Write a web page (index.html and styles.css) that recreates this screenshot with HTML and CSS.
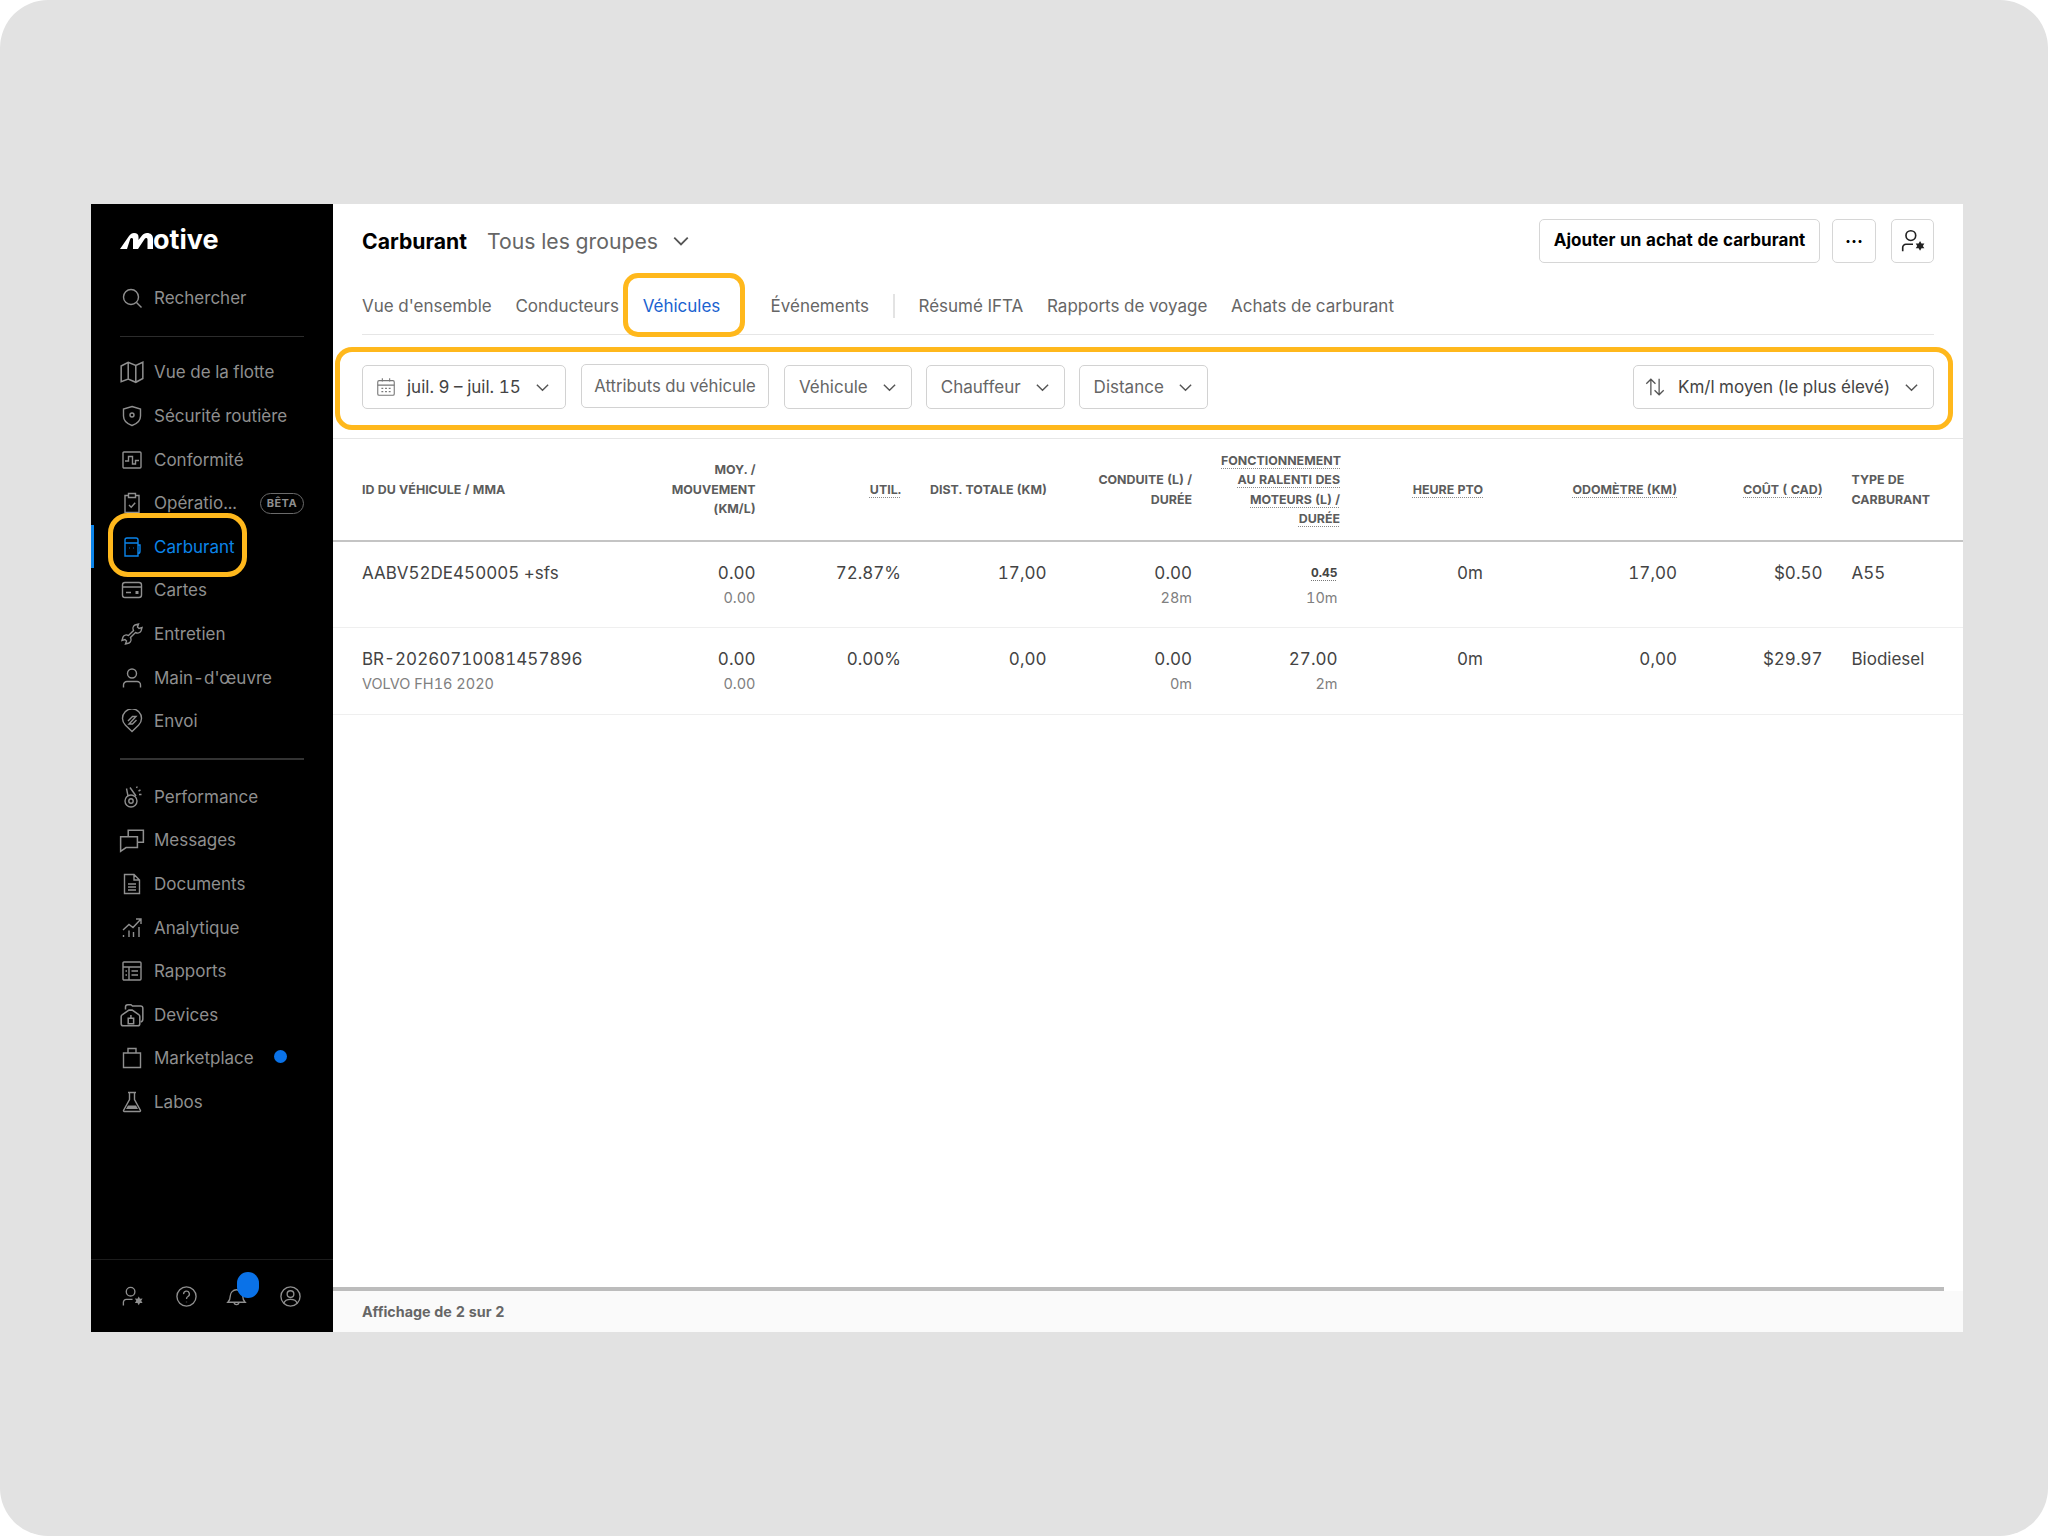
FILE: index.html
```html
<!DOCTYPE html>
<html lang="fr">
<head>
    <meta charset="UTF-8">
    <title>Carburant</title>
    <link rel="stylesheet" href="styles.css">
</head>
<body>
    <div class="frame">
        <div class="app">
            <!-- Barre latérale -->
            <aside class="sidebar">
                <div class="logo">
                    <svg class="logo-m" viewBox="0 0 33 16"><path d="M0 16 9 3C10.5 1 12 0 14 0c3 0 4.5 1.6 4.5 4v3L22 2.5C23.2.9 25 0 27 0c3.6 0 6 2.200 6 5.5V16h-5.5V6.5c0-1-.6-1.5-1.4-1.5-.5 0-1 .3-1.3.8L18 16h-5V6.5c0-1-.6-1.5-1.4-1.5-.5 0-1 .3-1.3.8L7 16z"/></svg>
                    <span>otive</span>
                </div>
                <a class="nav-item">
                    <svg class="icon" viewBox="0 0 24 24"><circle cx="11" cy="11" r="7.5"/><path d="m16.5 16.5 5 5"/></svg>
                    Rechercher
                </a>
                <div class="nav-sep"></div>
                <nav class="nav-group">
                    <a class="nav-item">
                        <svg class="icon icon-lg" viewBox="0 0 24 24"><path d="M2 6.5 8.5 3l7 3L22 3v15l-6.5 3.5-7-3L2 21zM8.5 3v15.5M15.5 6v15.5"/></svg>
                        Vue de la flotte
                    </a>
                    <a class="nav-item">
                        <svg class="icon" viewBox="0 0 24 24"><path d="M12 2.5 20.5 5v7c0 4.5-3.5 7.8-8.5 9.5-5-1.7-8.5-5-8.5-9.5V5z"/><circle cx="12" cy="11" r="2"/></svg>
                        Sécurité routière
                    </a>
                    <a class="nav-item">
                        <svg class="icon" viewBox="0 0 24 24"><rect x="3" y="4" width="18" height="16" rx="1"/><path d="M5 13h3.5V8.5h4V16h3v-3.5H19"/></svg>
                        Conformité
                    </a>
                    <a class="nav-item">
                        <svg class="icon" viewBox="0 0 24 24"><path d="M8.5 4.5H5v17h14v-17h-3.5M8.5 2.500h7v4h-7zM9 14l2.200 2.200 4-4.5"/></svg>
                        <span class="nav-label">Opératio...</span>
                        <span class="badge">BÊTA</span>
                    </a>
                    <a class="nav-item active">
                        <svg class="icon" viewBox="0 0 24 24"><path d="M5 21V5a2 2 0 0 1 2-2h9a2 2 0 0 1 2 2v16zM5 8h13M18 10h2v6c0 1.5-.8 2.5-2 2.5"/><path d="M9 13h.5M13.5 13h.5"/></svg>
                        Carburant
                    </a>
                    <a class="nav-item">
                        <svg class="icon" viewBox="0 0 24 24"><rect x="2.5" y="4.5" width="19" height="15" rx="2.5"/><path d="M2.5 9h19M6 14.5h5"/><path class="solid" d="M15.5 13h3v3h-3z"/></svg>
                        Cartes
                    </a>
                    <a class="nav-item">
                        <svg class="icon" viewBox="0 0 24 24"><path d="M15 3l3.5-1-1 3L19 6.5l3-1-1 3.500c-1 2-3.500 2.500-5.500 1.500l-5 5c1 2 .5 4.500-1.500 5.500L5.500 22l1-3L5 17.500l-3 1L3 15c1-2 3.500-2.500 5.500-1.500l5-5C12.500 6.500 13 4 15 3z"/></svg>
                        Entretien
                    </a>
                    <a class="nav-item">
                        <svg class="icon" viewBox="0 0 24 24"><circle cx="12" cy="7.5" r="4.5"/><path d="M3.5 21.5V19A3.5 3.5 0 0 1 7 15.5h10a3.500 3.500 0 0 1 3.500 3.500v2.500"/></svg>
                        Main-d'œuvre
                    </a>
                    <a class="nav-item">
                        <svg class="icon" viewBox="0 0 24 24"><path d="M12 22.500 5.500 16.300a9.500 9.500 0 1 1 13 0z"/><path d="M8 12l4.500-4.500H16L9 15h3.500l4-4"/></svg>
                        Envoi
                    </a>
                </nav>
                <div class="nav-sep sep-thick"></div>
                <nav class="nav-group">
                    <a class="nav-item">
                        <svg class="icon" viewBox="0 0 24 24"><circle cx="11" cy="16" r="6"/><circle cx="11" cy="16" r="2.2"/><path d="M6.500 3.500 8 11M10 2.500 16 11M16.500 3l.8-1.500M18.500 6l2-1M19 9.500h2.500"/></svg>
                        Performance
                    </a>
                    <a class="nav-item">
                        <svg class="icon icon-lg" viewBox="0 0 24 24"><path d="M8.5 9V3h14v11H17"/><path d="M1.5 9H17v10H6.5l-5 3.5z"/></svg>
                        Messages
                    </a>
                    <a class="nav-item">
                        <svg class="icon" viewBox="0 0 24 24"><path d="M4.5 2.5H14L19.5 8v13.500h-15zM14 2.500V8h5.500M8 12h8M8 15h8M8 18h8"/></svg>
                        Documents
                    </a>
                    <a class="nav-item">
                        <svg class="icon" viewBox="0 0 24 24"><path d="M3 14 9 8.5l4 3 7.500-8M16 3h5v5M3.500 21v-2M9 21v-6.500M13.500 21V16M19 21V11"/></svg>
                        Analytique
                    </a>
                    <a class="nav-item">
                        <svg class="icon" viewBox="0 0 24 24"><rect x="3" y="3" width="18" height="18" rx="1"/><path d="M3 8h18M9 8v13M5.500 12H7M5.500 16H7M11.500 12H18M11.500 16H18"/></svg>
                        Rapports
                    </a>
                    <a class="nav-item">
                        <svg class="icon icon-lg" viewBox="0 0 24 24"><path d="M6 7V4.500a2 2 0 0 1 2-2h3l1.500 1.200H20a2 2 0 0 1 2 2v10c0 1.500-.8 2.500-2 2.800"/><path d="M2 13.500a2 2 0 0 1 1.200-1.800l6-4.200h3l6 4.200a2 2 0 0 1 1 1.800V20a2 2 0 0 1-2 2H4a2 2 0 0 1-2-2z"/><path d="M8.500 15h5v5h-5zM11 12v3"/></svg>
                        Devices
                    </a>
                    <a class="nav-item">
                        <svg class="icon" viewBox="0 0 24 24"><path d="M3.500 7h17v14.500h-17zM8 7V2.500h8V7"/></svg>
                        <span class="nav-label">Marketplace</span>
                        <span class="dot"></span>
                    </a>
                    <a class="nav-item">
                        <svg class="icon" viewBox="0 0 24 24"><path d="M8 2.500h8M9.500 2.500v7L3.500 20.500a.8.8 0 0 0 .7 1h15.600a.8.8 0 0 0 .7-1L14.500 9.500v-7"/><path class="solid" d="M8 15.500h8l2 3.500H6z"/></svg>
                        Labos
                    </a>
                </nav>
                <div class="side-foot">
                    <svg class="foot-icon" viewBox="0 0 24 24"><circle cx="10" cy="7" r="4.5"/><path d="M2.500 21.500V18a3 3 0 0 1 3-3H12"/><path class="solid" d="m18.500 12 1.300 2.300 2.700-.1-1.400 2.300 1.400 2.300-2.700-.1-1.300 2.300-1.300-2.300-2.700.1 1.400-2.300-1.400-2.300 2.700.1z"/></svg>
                    <svg class="foot-icon" viewBox="0 0 24 24"><circle cx="12" cy="12" r="10"/><path d="M9 9.500a3 3 0 1 1 4.500 2.500c-1 .6-1.500 1.200-1.500 2.500M12 17.500v.5"/></svg>
                    <div class="bell">
                        <svg class="foot-icon" viewBox="0 0 24 24"><path d="M3 18c1.500-1.500 2.500-3 2.500-6.500a6.500 6.500 0 0 1 13 0c0 3.500 1 5 2.500 6.500zM9.500 18a2.500 2.500 0 0 0 5 0"/></svg>
                        <span class="bell-count"></span>
                    </div>
                    <svg class="foot-icon" viewBox="0 0 24 24"><circle cx="12" cy="12" r="10"/><circle cx="12" cy="9.500" r="3.500"/><path d="M5 19c1-3 3.500-4 7-4s6 1 7 4"/></svg>
                </div>
            </aside>

            <!-- Contenu principal -->
            <main class="main">
                <div class="content-head">
                    <div class="title-row">
                        <h1>Carburant</h1>
                        <div class="group-select">
                            Tous les groupes
                            <svg class="chev chev-lg" viewBox="0 0 16 16"><path d="m2 5 6 6 6-6"/></svg>
                        </div>
                        <div class="actions">
                            <button class="btn btn-add">Ajouter un achat de carburant</button>
                            <button class="btn btn-square">···</button>
                            <button class="btn btn-square btn-user">
                                <svg class="btn-icon" viewBox="0 0 24 24"><circle cx="10" cy="7" r="4.5"/><path d="M2.500 21.500V18a3 3 0 0 1 3-3H12"/><path class="solid" d="m18.500 12 1.300 2.300 2.700-.1-1.400 2.300 1.400 2.300-2.700-.1-1.300 2.300-1.300-2.300-2.700.1 1.400-2.300-1.400-2.300 2.700.1z"/></svg>
                            </button>
                        </div>
                    </div>
                    <div class="tabs">
                        <a class="tab">Vue d'ensemble</a>
                        <a class="tab">Conducteurs</a>
                        <a class="tab tab-on">Véhicules</a>
                        <a class="tab tab-after">Événements</a>
                        <span class="tab-sep"></span>
                        <a class="tab">Résumé IFTA</a>
                        <a class="tab">Rapports de voyage</a>
                        <a class="tab">Achats de carburant</a>
                    </div>
                    <div class="filters">
                        <button class="select select-date">
                            <svg class="cal" viewBox="0 0 24 24"><rect x="3" y="5" width="18" height="16" rx="1.5"/><path d="M3 10h18M8 2.500V6M16 2.500V6M7 13.500h2M11 13.500h2M15 13.500h2M7 17h2M11 17h2M15 17h2"/></svg>
                            <span class="dark">juil. 9 – juil. 15</span>
                            <svg class="chev" viewBox="0 0 16 16"><path d="m2 5 6 6 6-6"/></svg>
                        </button>
                        <button class="select select-plain">Attributs du véhicule</button>
                        <button class="select">Véhicule <svg class="chev" viewBox="0 0 16 16"><path d="m2 5 6 6 6-6"/></svg></button>
                        <button class="select">Chauffeur <svg class="chev" viewBox="0 0 16 16"><path d="m2 5 6 6 6-6"/></svg></button>
                        <button class="select">Distance <svg class="chev" viewBox="0 0 16 16"><path d="m2 5 6 6 6-6"/></svg></button>
                        <button class="select select-sort">
                            <svg class="sort" viewBox="0 0 24 24"><path d="M7.500 21V3.500M2.500 8.500l5-5 5 5M16.500 3v17.500M11.500 15.500l5 5 5-5"/></svg>
                            <span class="dark sort-label">Km/l moyen (le plus élevé)</span>
                            <svg class="chev" viewBox="0 0 16 16"><path d="m2 5 6 6 6-6"/></svg>
                        </button>
                    </div>
                </div>

                <div class="table-wrap">
                    <table class="data">
                        <colgroup>
                            <col class="c-id"><col class="c-moy"><col class="c-std"><col class="c-std"><col class="c-std"><col class="c-idle"><col class="c-pto"><col class="c-odo"><col class="c-std"><col class="c-type">
                        </colgroup>
                        <thead>
                            <tr>
                                <th class="left">ID du véhicule / MMA</th>
                                <th>Moy. / mouvement (km/l)</th>
                                <th><u>Util.</u></th>
                                <th class="nowrap">Dist. totale (km)</th>
                                <th>Conduite (L) / durée</th>
                                <th><u>Fonctionnement au ralenti des moteurs (L) / durée</u></th>
                                <th><u>Heure PTO</u></th>
                                <th><u>Odomètre (km)</u></th>
                                <th><u>Coût ( CAD)</u></th>
                                <th class="left">Type de carburant</th>
                            </tr>
                        </thead>
                        <tbody>
                            <tr>
                                <td class="left">AABV52DE450005 +sfs</td>
                                <td>0.00<small>0.00</small></td>
                                <td>72.87%</td>
                                <td>17,00</td>
                                <td>0.00<small>28m</small></td>
                                <td class="shift"><b class="tiny">0.45</b><small>10m</small></td>
                                <td>0m</td>
                                <td>17,00</td>
                                <td>$0.50</td>
                                <td class="left">A55</td>
                            </tr>
                            <tr>
                                <td class="left">BR-20260710081457896<small>VOLVO FH16 2020</small></td>
                                <td>0.00<small>0.00</small></td>
                                <td>0.00%</td>
                                <td>0,00</td>
                                <td>0.00<small>0m</small></td>
                                <td class="shift">27.00<small>2m</small></td>
                                <td>0m</td>
                                <td>0,00</td>
                                <td>$29.97</td>
                                <td class="left">Biodiesel</td>
                            </tr>
                        </tbody>
                    </table>
                </div>
                <div class="scroll-thumb"></div>
                <div class="table-foot">Affichage de 2 sur 2</div>
            </main>
        </div>
    </div>
</body>
</html>
```

FILE: styles.css
```css
*, *::before, *::after {
    box-sizing: border-box;
}
body {
    margin: 0;
    background-color: #ffffff;
    font-family: Inter, "Liberation Sans", sans-serif;
    font-variant-numeric: tabular-nums;
}
.frame {
    width: 2048px;
    height: 1536px;
    padding: 204px 85px 204px 91px;
    background-color: #e2e2e2;
    border-radius: 48px;
}
.app {
    display: flex;
    height: 1128px;
    background-color: #ffffff;
}

/* Barre latérale */
.sidebar {
    display: flex;
    flex-direction: column;
    width: 242px;
    flex-shrink: 0;
    background-color: #000000;
    color: #8f8f8f;
    font-size: 17px;
}
.logo {
    display: flex;
    align-items: flex-end;
    height: 34px;
    margin: 20px 0 18px 29px;
    padding-bottom: 8px;
    color: #ffffff;
    font-size: 27px;
    font-weight: 700;
    line-height: 20px;
}
.logo-m {
    width: 33px;
    height: 16px;
    margin-bottom: 1px;
    fill: #ffffff;
}
.nav-item {
    position: relative;
    display: flex;
    align-items: center;
    height: 43.6px;
    padding-left: 29px;
    padding-right: 29px;
}
.icon {
    width: 24px;
    height: 24px;
    margin-right: 10px;
    flex-shrink: 0;
    fill: none;
    stroke: currentColor;
    stroke-width: 1.4;
}
.icon-lg {
    width: 26px;
    height: 26px;
    margin-left: -1px;
    margin-right: 9px;
}
.solid {
    fill: currentColor;
    stroke: none;
}
.nav-sep {
    height: 1px;
    margin: 16px 29px 14px;
    background-color: #2c2c2c;
}
.sep-thick {
    height: 2px;
    margin: 15px 29px 15px;
    background-color: #333333;
}
.nav-label {
    flex: 1;
}
.badge {
    padding: 0 6px;
    height: 21px;
    line-height: 19px;
    border: 1px solid #6a6a6a;
    border-radius: 11px;
    font-size: 11px;
    font-weight: 700;
    letter-spacing: 0.4px;
}
.dot {
    width: 13px;
    height: 13px;
    margin-right: 17px;
    margin-top: -3px;
    border-radius: 50%;
    background-color: #0a72e8;
}
.active {
    color: #0b84ea;
}
.active::before {
    content: "";
    position: absolute;
    left: 0;
    top: 0;
    width: 3px;
    height: 43px;
    background-color: #0b84ea;
}
.active::after {
    content: "";
    position: absolute;
    left: 17px;
    top: -12px;
    width: 139px;
    height: 64px;
    border: 5px solid #ffb81c;
    border-radius: 20px;
}
.side-foot {
    display: flex;
    align-items: center;
    justify-content: space-between;
    height: 73px;
    margin-top: auto;
    padding: 0 31px 0 30px;
    border-top: 1px solid #1c1c1c;
}
.foot-icon {
    display: block;
    width: 23px;
    height: 23px;
    fill: none;
    stroke: #8f8f8f;
    stroke-width: 1.4;
    color: #8f8f8f;
}
.bell {
    position: relative;
    margin-left: -4px;
}
.bell-count {
    position: absolute;
    left: 12px;
    top: -13px;
    width: 22px;
    height: 26px;
    border-radius: 11px;
    background-color: #0a72e8;
}

/* Contenu */
.main {
    flex: 1;
    display: flex;
    flex-direction: column;
    min-width: 0;
}
.content-head {
    padding: 15px 29px 0;
}
.title-row {
    display: flex;
    align-items: center;
    height: 44px;
}
h1 {
    margin: 0 20px 0 0;
    font-size: 21.2px;
    font-weight: 700;
    color: #000000;
}
.group-select {
    display: flex;
    align-items: center;
    font-size: 21.2px;
    color: #666666;
}
.chev {
    width: 15px;
    height: 15px;
    margin-left: 14px;
    flex-shrink: 0;
    fill: none;
    stroke: #555555;
    stroke-width: 1.5;
}
.chev-lg {
    width: 18px;
    height: 18px;
    margin-left: 14px;
    stroke-width: 1.6;
}
.actions {
    display: flex;
    gap: 12px;
    margin-left: auto;
}
.btn {
    height: 44px;
    border: 1px solid #d6d6d6;
    border-radius: 5px;
    background-color: #ffffff;
    font-family: inherit;
    font-variant-numeric: inherit;
    color: #000000;
}
.btn-add {
    width: 281px;
    padding: 0 0 2px;
    font-size: 17px;
    font-weight: 700;
    letter-spacing: 0.05px;
}
.btn-square {
    display: flex;
    align-items: center;
    justify-content: center;
    width: 44px;
    padding: 0;
    font-size: 18px;
    font-weight: 700;
}
.btn-user {
    width: 43px;
    margin-left: 3px;
}
.btn-icon {
    width: 26px;
    height: 26px;
    fill: none;
    stroke: #222222;
    stroke-width: 1.5;
    color: #222222;
}
.tabs {
    display: flex;
    align-items: center;
    gap: 23.7px;
    height: 57px;
    margin-top: 15px;
    border-bottom: 1px solid #e6e6e6;
    font-size: 17px;
    color: #666666;
}
.tab-on {
    position: relative;
    color: #1a63d0;
}
.tab-on::after {
    content: "";
    position: absolute;
    left: -20px;
    top: -23px;
    width: 122px;
    height: 64px;
    border: 5px solid #ffb81c;
    border-radius: 15px;
}
.tab-after {
    margin-left: 26.5px;
}
.tab-sep {
    width: 2px;
    height: 24px;
    background-color: #e3e3e3;
}
.filters {
    position: relative;
    display: flex;
    gap: 14px;
    padding: 30px 0 29px;
}
.filters::after {
    content: "";
    position: absolute;
    left: -27px;
    right: -19px;
    top: 12px;
    height: 83px;
    border: 5px solid #ffb81c;
    border-radius: 17px;
    pointer-events: none;
}
.select {
    display: flex;
    align-items: center;
    height: 44px;
    padding: 0 14px;
    border: 1px solid #d2d2d2;
    border-radius: 5px;
    background-color: #ffffff;
    font-family: inherit;
    font-variant-numeric: inherit;
    font-size: 17px;
    color: #666666;
}
.select-date {
    width: 204px;
    margin-right: 1px;
    padding-left: 12px;
}
.cal {
    width: 22px;
    height: 22px;
    margin-right: 10px;
    fill: none;
    stroke: #777777;
    stroke-width: 1.2;
}
.dark {
    color: #444444;
    white-space: nowrap;
}
.select-plain {
    width: 188px;
    margin-top: -1px;
    margin-right: 1px;
    padding: 0;
    justify-content: center;
    white-space: nowrap;
    font-size: 16.7px;
}
.select-sort {
    width: 301px;
    margin-left: auto;
    padding: 0 14px 0 10px;
}
.sort {
    width: 22px;
    height: 22px;
    flex-shrink: 0;
    fill: none;
    stroke: #555555;
    stroke-width: 1.4;
}
.sort-label {
    margin-left: 12px;
    margin-right: auto;
}

/* Tableau */
.table-wrap {
    flex: 1;
    border-top: 1px solid #e6e6e6;
}
.data {
    width: 100%;
    table-layout: fixed;
    border-collapse: collapse;
}
.c-id { width: 307px; }
.c-moy { width: 130px; }
.c-std { width: 145.5px; }
.c-idle { width: 148px; }
.c-pto { width: 143px; }
.c-odo { width: 194px; }
.data th {
    height: 102px;
    padding: 0 14.5px;
    border-bottom: 2px solid #c4c4c4;
    font-size: 12.4px;
    font-weight: 700;
    line-height: 19.5px;
    text-align: right;
    text-transform: uppercase;
    color: #5c5c5c;
}
.data th.nowrap {
    white-space: nowrap;
}
.data th:first-child,
.data td:first-child {
    padding-left: 29px;
}
.data th.left,
.data td.left {
    text-align: left;
}
.data u {
    text-decoration: underline dotted #8a8a8a 1px;
    text-underline-offset: 3px;
}
.data td {
    height: 86.5px;
    padding: 19px 14.5px 0;
    border-bottom: 1px solid #efefef;
    vertical-align: top;
    font-size: 17px;
    line-height: 24px;
    text-align: right;
    color: #444444;
}
.data td.shift {
    padding-right: 17px;
}
.data small {
    display: block;
    margin-top: 1px;
    font-size: 14.5px;
    line-height: 24px;
    color: #808080;
}
.tiny {
    display: block;
    height: 24px;
    font-size: 12px;
    text-decoration: underline dotted #777777 1px;
    text-underline-offset: 3px;
}
.scroll-thumb {
    height: 4px;
    margin-right: 19px;
    background-color: #bcbcbc;
}
.table-foot {
    display: flex;
    align-items: center;
    height: 41px;
    padding-left: 29px;
    background-color: #fafafa;
    font-size: 14.3px;
    font-weight: 700;
    color: #666666;
}
```
